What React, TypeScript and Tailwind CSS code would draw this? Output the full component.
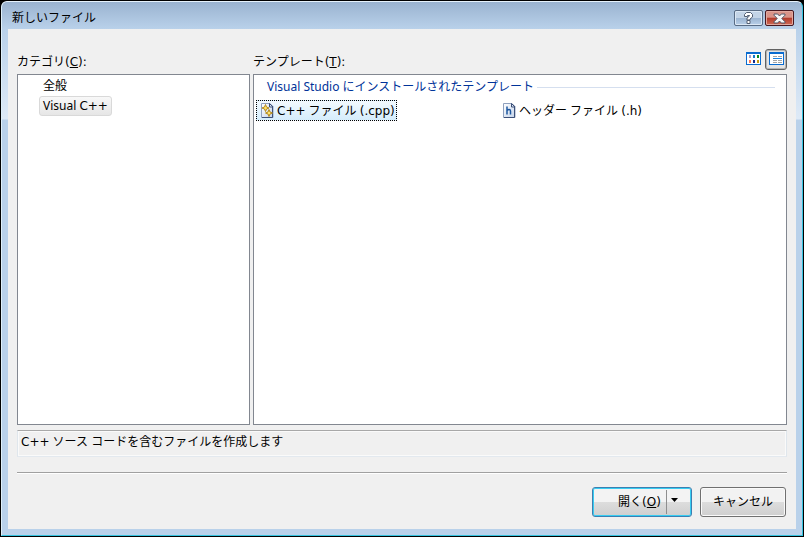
import { useState } from "react";
import type { ReactNode } from "react";

const text = "font-['Noto_Sans','Noto_Sans_CJK_JP',sans-serif] text-[12px] leading-[18px]";

function Wide({ children }: { children: ReactNode }) {
  return <span className="font-['DejaVu_Sans',sans-serif]">{children}</span>;
}

function HelpGlyph() {
  return (
    <svg width="11" height="12" viewBox="0 0 11 12" aria-hidden="true">
      <path
        d="M1.500 4.500V2.500l2-2h4l2 2v2.500l-2.500 2v1H4V6l2.500-2V3.500h-2v1zM4 8.500h3v3H4z"
        fill="#fff"
        stroke="#535f73"
        strokeLinejoin="round"
      />
    </svg>
  );
}

function CloseGlyph() {
  return (
    <svg width="13" height="11" viewBox="0 0 13 11" aria-hidden="true">
      <path
        d="M1 1h3.700l1.800 2 1.800-2H12v1.200L8.800 5.500 12 8.800V10H8.300L6.500 8 4.700 10H1V8.800l3.200-3.300L1 2.200z"
        fill="#f6f6f6"
        stroke="#535666"
      />
    </svg>
  );
}

function IconsViewGlyph() {
  return (
    <svg width="15" height="13" viewBox="0 0 15 13" shapeRendering="crispEdges" aria-hidden="true">
      <rect width="15" height="13" fill="#0a6cd0" />
      <rect x="1" y="2" width="13" height="10" fill="#fff" />
      <rect x="3" y="3" width="2" height="3" fill="#a59cc9" />
      <rect x="7" y="3" width="2" height="3" fill="#1479c9" />
      <rect x="11" y="3" width="2" height="3" fill="#0a8a1c" />
      <rect x="3" y="8" width="2" height="3" fill="#ff7850" />
      <rect x="7" y="8" width="2" height="3" fill="#152a8c" />
      <rect x="11" y="8" width="2" height="3" fill="#c89a10" />
    </svg>
  );
}

function ListViewGlyph() {
  return (
    <svg width="15" height="13" viewBox="0 0 15 13" shapeRendering="crispEdges" aria-hidden="true">
      <rect width="15" height="13" fill="#0a6cd0" />
      <rect x="1" y="2" width="13" height="10" fill="#fff" />
      <path d="M4 4.500h4M9 4.500h4M4 8.500h4M9 8.500h4M4 10.500h4M9 10.500h4" stroke="#a4a4a4" />
      <path d="M4 6.500h9" stroke="#1d83e2" />
    </svg>
  );
}

function Page({ children }: { children: ReactNode }) {
  return (
    <svg width="13" height="15" viewBox="0 0 13 15" className="shrink-0" aria-hidden="true">
      <defs>
        <linearGradient id="paper" x1="0" y1="0" x2="1" y2="1">
          <stop offset="0" stopColor="#fff" />
          <stop offset="1" stopColor="#c3d3ea" />
        </linearGradient>
      </defs>
      <path d="M.5.5h8.500l3 3v11H.5z" fill="url(#paper)" stroke="#8fa0bd" />
      <path d="M11.500 4v10.500H1" fill="none" stroke="#3c5078" />
      <path d="M8.500.5v3.500h3.500z" fill="#dbe5f4" stroke="#3c5078" />
      {children}
    </svg>
  );
}

function CppIcon() {
  return (
    <Page>
      <path
        d="M4.500 1.500l1 2.500 2.500 1-2.500 1-1 2.500-1-2.500L1 5l2.500-1zM8 6.500l1 2.500 2.500 1L9 11l-1 2.500L7 11l-2.500-1L7 9z"
        fill="#ffe26a"
        stroke="#b58a1c"
      />
    </Page>
  );
}

function HeaderIcon() {
  return (
    <Page>
      <path d="M4 3.500v8M4 7.500q1-1 2.200-1T7.500 8v3.500" fill="none" stroke="#1d579f" strokeWidth="1.500" />
    </Page>
  );
}

export default function App() {
  const [view, setView] = useState("list");
  const viewButton = "flex h-[21px] w-[22px] items-start rounded-[3px] border pt-[2px] pl-[3px]";
  const pressed = "border-[#626262] bg-[#e4e4e4] shadow-[inset_0_0_0_1px_#b5b5b5]";

  return (
    <div className={`${text} flex min-h-screen bg-black p-px text-black`}>
      <div className="flex grow flex-col rounded-t-[6px] border border-t-[#e6f2fc] border-r-[#35c3df] border-b-[#35c3df] border-l-[#dff0fa] bg-[#b9d1ea] bg-[linear-gradient(#9ab3d0,#b9d1ea_27px,#deeaf7_117px,#b9d1ea_118px)] px-[6px] pb-[6px]">
        <header className="flex h-[27px] shrink-0 items-start justify-between pl-1">
          <h1 className="pt-[7px]">新しいファイル</h1>
          <div className="flex gap-[2px] pt-2 pr-[2px]">
            <button aria-label="ヘルプ" className="flex h-4 w-[29px] items-center justify-center rounded-[2px] border border-[#586b84] bg-[linear-gradient(#c3d4e7_50%,#9bb4d1_50%,#b9d0e9)] shadow-[inset_0_0_0_1px_#dce8f5]">
              <HelpGlyph />
            </button>
            <button aria-label="閉じる" className="flex h-4 w-[29px] items-center justify-center rounded-[2px] border border-[#471820] bg-[linear-gradient(#d99489_45%,#b33a2a_50%,#cf6b57)] shadow-[inset_0_0_0_1px_#e2a99f]">
              <CloseGlyph />
            </button>
          </div>
        </header>

        <main className="flex grow flex-col bg-[#f0f0f0] px-[9px] pt-5 pb-3">
          <div className="flex grow gap-[3px]">
            <section className="flex w-[233px] shrink-0 flex-col">
              <h2 id="categories" className="flex h-[25px] items-center">
                <span>カテゴリ<Wide>(<u>C</u>):</Wide></span>
              </h2>
              <ul aria-labelledby="categories" className="grow border border-[#828790] bg-white px-[21px] pt-[1px]">
                <li>
                  <button className="block h-5 border border-transparent px-[3px]">全般</button>
                </li>
                <li>
                  <button aria-pressed="true" className="flex h-5 items-center rounded-[3px] border border-[#d9d9d9] bg-[linear-gradient(#f8f8f8,#e6e6e6)] px-[3px] whitespace-pre">
                    Visual <Wide>C++</Wide>
                  </button>
                </li>
              </ul>
            </section>

            <section className="flex grow flex-col">
              <div className="flex h-[25px] items-start justify-between">
                <h2 id="templates" className="flex h-[25px] items-center">
                  <span>テンプレート<Wide>(<u>T</u>):</Wide></span>
                </h2>
                <div className="flex gap-px">
                  <button aria-label="アイコン表示" aria-pressed={view === "icons"} onClick={() => setView("icons")} className={`${viewButton} ${view === "icons" ? pressed : "border-transparent"}`}>
                    <IconsViewGlyph />
                  </button>
                  <button aria-label="一覧表示" aria-pressed={view === "list"} onClick={() => setView("list")} className={`${viewButton} ${view === "list" ? pressed : "border-transparent"}`}>
                    <ListViewGlyph />
                  </button>
                </div>
              </div>
              <div className="grow border border-[#828790] bg-white px-[2px] pt-[3px]">
                <h3 className="flex items-center gap-[3px] pr-[9px] pl-[11px] text-[#003399]">
                  Visual Studio にインストールされたテンプレート
                  <span className="h-px grow bg-[#d5dfef]" />
                </h3>
                <ul aria-labelledby="templates" className="flex pt-[4px]">
                  <li className="w-[242px]">
                    <button aria-pressed="true" className="flex h-[21px] items-center gap-[3px] border border-dotted border-black bg-[linear-gradient(#f2f9fe,#d5edfc)] pr-px pl-1">
                      <CppIcon />
                      <span><Wide>C++</Wide> ファイル <Wide>(.cpp)</Wide></span>
                    </button>
                  </li>
                  <li>
                    <button className="flex h-[21px] items-center gap-[3px] border border-transparent px-1">
                      <HeaderIcon />
                      <span>ヘッダー ファイル <Wide>(.h)</Wide></span>
                    </button>
                  </li>
                </ul>
              </div>
            </section>
          </div>

          <p className="mt-[5px] h-[27px] border border-t-[#a8a8a8] border-r-[#dfe6ec] border-b-[#e3e9ef] border-l-[#dfe6ec] px-[3px] pt-[2px] shadow-[inset_0_0_0_1px_#fafafa]">
            <Wide>C++</Wide> ソース コードを含むファイルを作成します
          </p>

          <hr className="mt-[15px] h-[2px] border-t border-b border-t-[#a0a0a0] border-b-white" />

          <footer className="mt-[13px] flex justify-end gap-2 pr-px">
            <div className="flex h-[30px] w-[100px] rounded-[3px] border border-[#3c7fb1] bg-[linear-gradient(#f3f3f3_50%,#dddddd_50%,#cfcfcf)] shadow-[inset_0_0_0_1px_#37cdf2]">
              <button className="grow pl-5">開く<Wide>(<u>O</u>)</Wide></button>
              <button aria-label="開く方法" className="my-[2px] flex w-[25px] justify-start border-l border-[#8e8e8e] pt-2 pl-[4px]">
                <svg width="7" height="4" viewBox="0 0 7 4" aria-hidden="true">
                  <path d="M0 0h7L3.500 4z" />
                </svg>
              </button>
            </div>
            <button className="h-[30px] w-[86px] rounded-[3px] border border-[#707070] bg-[linear-gradient(#f2f2f2_50%,#dddddd_50%,#cfcfcf)] shadow-[inset_0_0_0_1px_#fafafa]">
              キャンセル
            </button>
          </footer>
        </main>
      </div>
    </div>
  );
}
